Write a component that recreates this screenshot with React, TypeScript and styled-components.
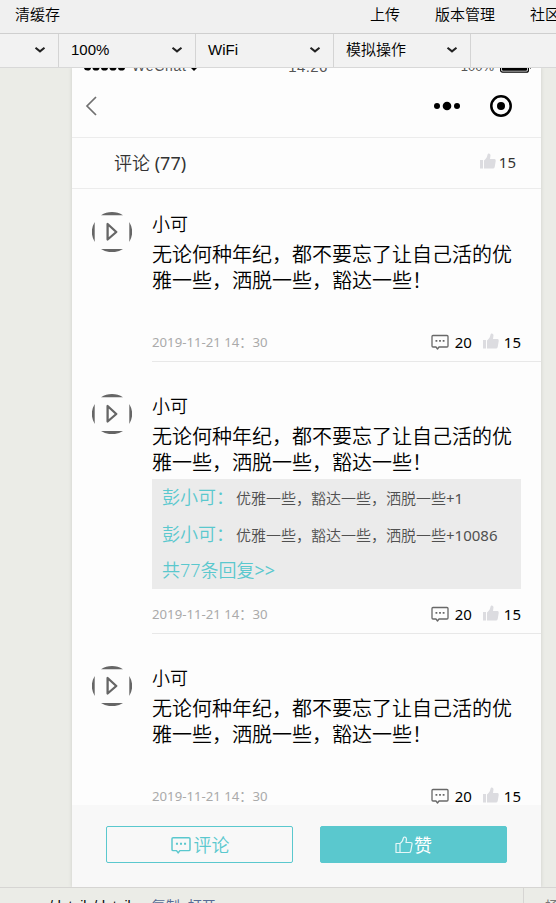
import React from "react";
import styled, { createGlobalStyle } from "styled-components";

const cjk = '"Noto Sans CJK SC", sans-serif';
const segoe = `"Noto Sans", ${cjk}`;
const arial = `"Liberation Sans", ${cjk}`;
const teal = "#5ac8ce";

const GlobalStyle = createGlobalStyle`
  * { box-sizing: border-box; }
  body { margin: 0; background: #ebece7; }
  svg { display: block; flex: none; }
`;

const Window = styled.div`
  width: 556px;
  height: 903px;
  overflow: hidden;
  display: flex;
  flex-direction: column;
  background: #ebece7;
  font-family: ${segoe};
  font-weight: 350;
  color: #000;
  white-space: nowrap;
`;

const MenuBar = styled.header`
  height: 34px;
  flex: none;
  display: flex;
  align-items: center;
  padding: 0 0 4px 15px;
  background: #f0f0f0;
  border-bottom: 1px solid #cfcfcf;
  font: 350 15px/28px ${arial};
`;

const MenuItem = styled.span<{ $before?: number }>`
  flex: none;
  margin-left: ${(p) => p.$before ?? 0}px;
`;

const SelectBar = styled.div`
  height: 34px;
  flex: none;
  display: flex;
  background: #f2f2f2;
  border-bottom: 1px solid #d8d8d8;
`;

const SelectBox = styled.div<{ $width: number }>`
  width: ${(p) => p.$width}px;
  display: flex;
  align-items: center;
  justify-content: space-between;
  padding: 0 12px 1px;
  border-right: 1px solid #d4d4d4;
  font: 350 15px/30px ${arial};
`;

const Phone = styled.main`
  width: 469px;
  height: 819px;
  flex: none;
  margin-left: 72px;
  display: flex;
  flex-direction: column;
  background: #fdfdfd;
  box-shadow: 0 0 4px rgba(0, 0, 0, 0.13);
  clip-path: inset(0 -8px);
`;

const StatusBar = styled.div`
  height: 8px;
  flex: none;
  overflow: hidden;
  display: grid;
  grid-template-columns: 1fr auto 1fr;
  grid-template-rows: 8px;
  align-items: end;
  padding: 0 9px 0 12px;
  font: 400 14px/19px ${arial};
  color: #555;
`;

const StatusGroup = styled.div<{ $end?: boolean }>`
  display: flex;
  align-items: center;
  justify-content: ${(p) => (p.$end ? "flex-end" : "flex-start")};
  gap: ${(p) => (p.$end ? 6 : 4)}px;
  font-size: ${(p) => (p.$end ? 13 : 14)}px;
`;

const Carrier = styled.span`
  letter-spacing: 0.7px;
  margin: 0 -3px 0 2px;
`;

const StatusTime = styled.span`
  font-size: 15px;
  letter-spacing: 0.4px;
`;

const NavBar = styled.nav`
  height: 62px;
  flex: none;
  display: flex;
  align-items: center;
  justify-content: space-between;
  padding: 0 29px 1px 13px;
  border-bottom: 1px solid #ececec;
`;

const NavActions = styled.div`
  display: flex;
  align-items: center;
  gap: 29px;
`;

const CommentHeader = styled.div`
  height: 51px;
  flex: none;
  display: flex;
  align-items: center;
  justify-content: space-between;
  padding: 0 25px 2px 42px;
  border-bottom: 1px solid #ececec;
  color: #333;
  font-size: 18px;
`;

const Regular = styled.span`
  font-weight: 400;
`;

const Count = styled.span<{ $gap?: number }>`
  display: flex;
  align-items: center;
  gap: ${(p) => p.$gap ?? 5}px;
  font-size: 15px;
  line-height: 22px;
  font-weight: 400;
`;

const Feed = styled.section`
  flex: 1;
  min-height: 0;
  overflow: hidden;
  padding-top: 23px;
`;

const Comment = styled.article`
  display: flex;
  padding: 0 0 32px 20px;
`;

const CommentBody = styled.div`
  flex: 1;
  margin-left: 20px;
  padding-right: 20px;
  border-bottom: 1px solid #e8e8e8;
`;

const Author = styled.div`
  font-size: 18px;
  line-height: 24px;
  margin-bottom: 6px;
`;

const Message = styled.div`
  width: 362px;
  font-size: 20px;
  line-height: 26px;
  white-space: normal;
`;

const Replies = styled.div`
  min-height: 20px;
  margin: 3px 0 13px;
`;

const ReplyPanel = styled.div`
  height: 110px;
  padding-left: 10px;
  background: #ebebeb;
  color: ${teal};
  font-size: 18px;
`;

const Reply = styled.div`
  height: 37px;
  line-height: 37px;
  display: flex;
`;

const ReplyAuthor = styled.span`
  width: 74px;
`;

const ReplyText = styled.span`
  color: #505050;
  font-size: 15px;
  line-height: 39px;
`;

const MoreReplies = styled.div`
  line-height: 35px;
`;

const Meta = styled.div`
  height: 22px;
  margin-bottom: 9px;
  display: flex;
  align-items: center;
  justify-content: space-between;
`;

const DateText = styled.time`
  color: #aaa;
  font-size: 13.200px;
  line-height: 20px;
  padding-top: 2px;
  font-weight: 400;
`;

const Counters = styled.div`
  display: flex;
  gap: 11px;
  padding-top: 1px;
`;

const Actions = styled.footer`
  height: 82px;
  flex: none;
  display: grid;
  grid-template-columns: 187px 187px;
  gap: 27px;
  padding: 21px 34px 0;
  background: #f8f8f8;
`;

const ActionButton = styled.button<{ $filled?: boolean }>`
  height: 37px;
  display: flex;
  align-items: center;
  justify-content: center;
  gap: ${(p) => (p.$filled ? 1 : 2)}px;
  padding: 0;
  border: 1px solid ${teal};
  border-radius: 2px;
  background: ${(p) => (p.$filled ? teal : "transparent")};
  color: ${(p) => (p.$filled ? "#fff" : teal)};
  font: ${(p) => (p.$filled ? 400 : 350)} 18px/34px ${segoe};
`;

const PathBar = styled.div`
  height: 16px;
  flex: none;
  overflow: hidden;
  display: flex;
  border-top: 1px solid #d6d5d3;
  font: 400 14px/36px ${arial};
`;

const PathText = styled.div`
  width: 524px;
  flex: none;
  padding-left: 49px;
  display: flex;
  border-right: 1px solid #d6d5d3;
`;

const PathLink = styled.span<{ $before: number }>`
  margin-left: ${(p) => p.$before}px;
  color: #576b95;
`;

const SceneText = styled.span`
  padding-left: 21px;
  color: #777;
`;

const Chevron = () => (
  <svg width="12" height="8" viewBox="0 0 12 8" fill="none" stroke="#222" strokeWidth="2">
    <path d="M1.5 1.8 6 5.4l4.500-3.600" />
  </svg>
);

const BackIcon = () => (
  <svg width="12" height="20" viewBox="0 0 12 20" fill="none" stroke="#707070" strokeWidth="1.7">
    <path d="M11 1 2 10l9 9" />
  </svg>
);

const DotsIcon = () => (
  <svg width="28" height="10" viewBox="0 0 28 10">
    <circle cx="4" cy="5" r="3" />
    <circle cx="14" cy="5" r="4.300" />
    <circle cx="24" cy="5" r="3" />
  </svg>
);

const TargetIcon = () => (
  <svg width="22" height="22" viewBox="0 0 22 22">
    <circle cx="11" cy="11" r="9.700" fill="none" stroke="#000" strokeWidth="2.500" />
    <circle cx="11" cy="11" r="4" />
  </svg>
);

const SignalIcon = () => (
  <svg width="42" height="8" viewBox="0 0 42 8">
    {[3.500, 12, 20.500, 29, 37.500].map((x) => (
      <circle key={x} cx={x} cy="4" r="3.600" />
    ))}
  </svg>
);

const WifiIcon = () => (
  <svg width="12" height="9" viewBox="0 0 12 9">
    <path d="M0 3q6-5 12 0L6 9Z" />
  </svg>
);

const BatteryIcon = () => (
  <svg width="32" height="13" viewBox="0 0 32 13">
    <rect x=".6" y=".6" width="27.800" height="11.600" rx="2" fill="none" stroke="#000" strokeWidth="1.200" />
    <rect x="2" y="2" width="25" height="8.800" rx="1" />
    <path d="M30 4q3 2.500 0 5Z" />
  </svg>
);

const AvatarIcon = () => (
  <svg width="40" height="40" viewBox="0 0 40 40" fill="#666">
    <path d="M9 3.300a20 20 0 0 1 22 0ZM9 36.900h22a20 20 0 0 1-22 0ZM2.700 10v20a20 20 0 0 1 0-20ZM37.300 10v20a20 20 0 0 0 0-20Z" />
    <path d="M15.600 12v15.500l8.700-7.500Z" fill="none" stroke="#666" strokeWidth="2.300" strokeLinejoin="round" />
  </svg>
);

const LikeIcon = () => (
  <svg width="16" height="18" viewBox="0 0 16 18" fill="#dcdce0">
    <path d="M0 7h3v8.500H0ZM4 7.500C6.500 5.500 7 4 7.500 1.700 8-.4 10.500.3 10.500 2.500L10 6h4.200q1.800 0 1.500 2l-1 6q-.3 1.500-1.700 1.500H4Z" />
  </svg>
);

const LikeOutlineIcon = () => (
  <svg width="18" height="18" viewBox="0 0 18 18" fill="none" stroke="#fff" strokeOpacity=".85" strokeWidth="1.200" strokeLinejoin="round">
    <path d="M1 7.500h4v9H1ZM5 7.500C7 6.500 8 4 8.300 2.200 8.700.3 11.500.8 11.500 3.200L11 6.500h4.500q1.800 0 1.500 1.800l-1.200 6.500q-.3 1.700-2 1.700H5Z" />
  </svg>
);

const BubbleIcon = ({ width = 18, height = 16, color = "#686868" }: { width?: number; height?: number; color?: string }) => (
  <svg width={width} height={height} viewBox="0 0 18 16" fill="none" stroke={color} strokeWidth="1.300" strokeLinejoin="round">
    <path d="M2 1.500h14q1 0 1 1v9.500q0 1-1 1H8l-1.500 2-1.500-2H2q-1 0-1-1v-9.500q0-1 1-1Z" />
    <path d="M4.500 6.800h1.800M8.100 6.800h1.800M11.700 6.800h1.800" strokeWidth="1.800" />
  </svg>
);

interface ReplyData {
  text: string;
  suffix: string;
}

interface CommentData {
  id: number;
  replies: ReplyData[];
}

const comments: CommentData[] = [
  { id: 1, replies: [] },
  {
    id: 2,
    replies: [
      { text: "优雅一些，豁达一些，洒脱一些", suffix: "+1" },
      { text: "优雅一些，豁达一些，洒脱一些", suffix: "+10086" },
    ],
  },
  { id: 3, replies: [] },
];

const CommentItem = ({ replies }: { replies: ReplyData[] }) => (
  <Comment>
    <AvatarIcon />
    <CommentBody>
      <Author>小可</Author>
      <Message>无论何种年纪，都不要忘了让自己活的优雅一些，洒脱一些，豁达一些！</Message>
      <Replies>
        {replies.length > 0 && (
          <ReplyPanel>
            {replies.map((reply) => (
              <Reply key={reply.suffix}>
                <ReplyAuthor>彭小可：</ReplyAuthor>
                <ReplyText>{reply.text}<Regular>{reply.suffix}</Regular></ReplyText>
              </Reply>
            ))}
            <MoreReplies>共77条回复<Regular>&gt;&gt;</Regular></MoreReplies>
          </ReplyPanel>
        )}
      </Replies>
      <Meta>
        <DateText>2019-11-21 14：30</DateText>
        <Counters>
          <Count $gap={6}><BubbleIcon />20</Count>
          <Count><LikeIcon />15</Count>
        </Counters>
      </Meta>
    </CommentBody>
  </Comment>
);

export default function App() {
  return (
    <Window>
      <GlobalStyle />
      <MenuBar>
        <MenuItem>清缓存</MenuItem>
        <MenuItem $before={310}>上传</MenuItem>
        <MenuItem $before={35}>版本管理</MenuItem>
        <MenuItem $before={35}>社区</MenuItem>
      </MenuBar>
      <SelectBar>
        <SelectBox $width={59}><span /><Chevron /></SelectBox>
        <SelectBox $width={137}>100%<Chevron /></SelectBox>
        <SelectBox $width={138}>WiFi<Chevron /></SelectBox>
        <SelectBox $width={137}>模拟操作<Chevron /></SelectBox>
      </SelectBar>
      <Phone>
        <StatusBar>
          <StatusGroup><SignalIcon /><Carrier>WeChat</Carrier><WifiIcon /></StatusGroup>
          <StatusTime>14:26</StatusTime>
          <StatusGroup $end>100%<BatteryIcon /></StatusGroup>
        </StatusBar>
        <NavBar>
          <BackIcon />
          <NavActions><DotsIcon /><TargetIcon /></NavActions>
        </NavBar>
        <CommentHeader>
          <span>评论 <Regular>(77)</Regular></span>
          <Count $gap={3}><LikeIcon />15</Count>
        </CommentHeader>
        <Feed>
          {comments.map((c) => <CommentItem key={c.id} replies={c.replies} />)}
        </Feed>
        <Actions>
          <ActionButton><BubbleIcon width={22} height={18} color={teal} />评论</ActionButton>
          <ActionButton $filled><LikeOutlineIcon />赞</ActionButton>
        </Actions>
      </Phone>
      <PathBar>
        <PathText>
          /details/details
          <PathLink $before={14}>复制</PathLink>
          <PathLink $before={8}>打开</PathLink>
        </PathText>
        <SceneText>场景</SceneText>
      </PathBar>
    </Window>
  );
}
